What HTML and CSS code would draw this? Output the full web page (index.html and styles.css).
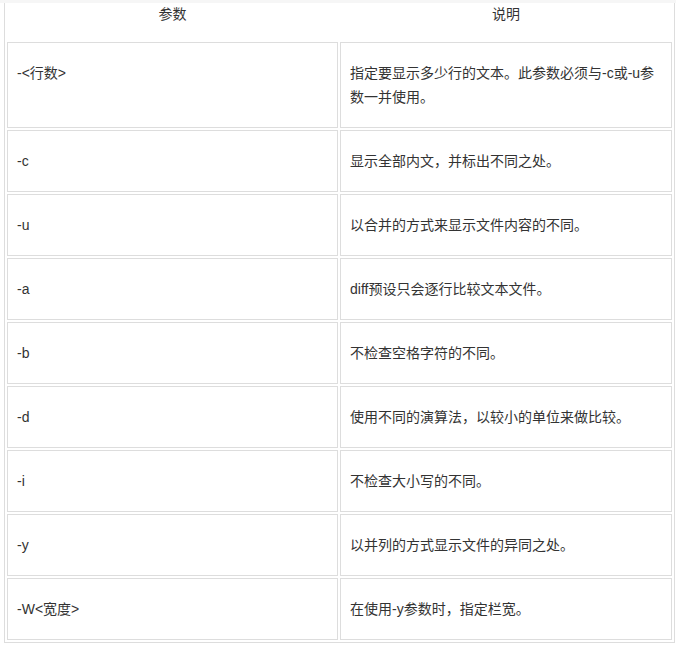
FILE: index.html
```html
<!DOCTYPE html>
<html lang="zh">
<head>
<meta charset="utf-8">
<link rel="stylesheet" href="styles.css">
</head>
<body>
<div class="topbar"></div>
<table class="params">
  <colgroup><col class="c1"><col class="c2"></colgroup>
  <thead>
    <tr><th>参数</th><th>说明</th></tr>
  </thead>
  <tbody>
    <tr><td>-&lt;行数&gt;</td><td>指定要显示多少行的文本。此参数必须与-c或-u参数一并使用。</td></tr>
    <tr><td>-c</td><td>显示全部内文，并标出不同之处。</td></tr>
    <tr><td>-u</td><td>以合并的方式来显示文件内容的不同。</td></tr>
    <tr><td>-a</td><td>diff预设只会逐行比较文本文件。</td></tr>
    <tr><td>-b</td><td>不检查空格字符的不同。</td></tr>
    <tr><td>-d</td><td>使用不同的演算法，以较小的单位来做比较。</td></tr>
    <tr><td>-i</td><td>不检查大小写的不同。</td></tr>
    <tr><td>-y</td><td>以并列的方式显示文件的异同之处。</td></tr>
    <tr><td>-W&lt;宽度&gt;</td><td>在使用-y参数时，指定栏宽。</td></tr>
  </tbody>
</table>
</body>
</html>
```
FILE: styles.css
```css
html, body {
  margin: 0;
  padding: 0;
  background: #ffffff;
}
body {
  font-family: "Liberation Sans", "Noto Sans CJK SC", sans-serif;
  font-size: 14px;
  color: #333333;
}
.topbar {
  height: 3px;
  background: #f6f6f6;
}
.params {
  margin-left: 4px;
  width: 671px;
  table-layout: fixed;
  border-collapse: separate;
  border-spacing: 2px;
  border: 1px solid #dddddd;
  border-top: none;
}
.c1 { width: 331px; }
.c2 { width: 332px; }
.params th {
  font-weight: normal;
  text-align: center;
  line-height: 17px;
  padding: 1px 9px 17px;
  border: none;
  vertical-align: top;
}
.params td {
  border: 1px solid #dddddd;
  line-height: 24px;
  padding: 18px 9px;
  text-align: left;
  vertical-align: baseline;
}
```
